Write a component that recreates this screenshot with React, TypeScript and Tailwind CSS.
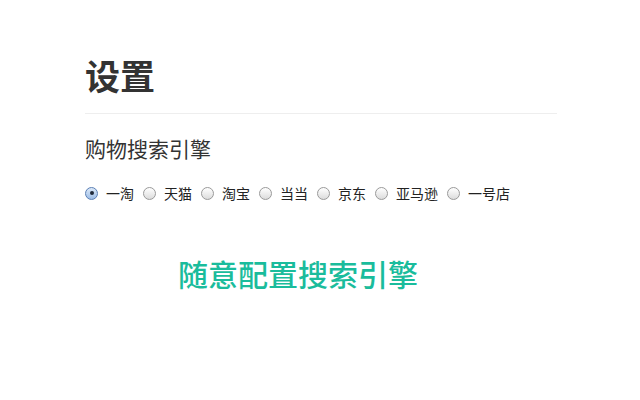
import { useState } from 'react';

const engines = ['一淘', '天猫', '淘宝', '当当', '京东', '亚马逊', '一号店'];

const font = 'font-["Noto_Sans_CJK_SC","Liberation_Sans",sans-serif]';

const Radio = ({ checked }: { checked: boolean }) => (
  <span
    className={
      checked
        ? 'flex h-[13px] w-[13px] items-center justify-center rounded-full border border-[#5a7fb5] bg-gradient-to-b from-[#dce9f8] to-[#9dbde6]'
        : 'flex h-[13px] w-[13px] items-center justify-center rounded-full border border-[#9a9a9a] bg-gradient-to-b from-white to-[#dcdcdc]'
    }
  >
    {checked && <span className="h-[4px] w-[4px] rounded-full bg-[#1f2a3a]" />}
  </span>
);

export default function App() {
  const [selected, setSelected] = useState(0);

  return (
    <div className={`h-[400px] w-[640px] bg-white text-[#333] ${font}`}>
      <div className="flex w-[557px] flex-col pl-[85px] pt-[50px]">
        <h1 className="text-[35px] leading-[50px] font-bold">设置</h1>
        <div className="mt-[13px] h-px bg-[#eeeeee]" />
        <h2 className="mt-[19px] text-[21px] leading-[30px]">购物搜索引擎</h2>
        <div className="mt-[21px] flex items-center">
          {engines.map((name, i) => (
            <label
              key={name}
              onClick={() => setSelected(i)}
              className="mr-[9px] flex cursor-pointer items-center"
            >
              <Radio checked={selected === i} />
              <span className="ml-[8px] text-[14px] leading-[18px] text-[#222]">{name}</span>
            </label>
          ))}
        </div>
        <p className="mt-[51px] pl-[93px] text-[30px] leading-[40px] font-medium text-[#1abc9c]">
          随意配置搜索引擎
        </p>
      </div>
    </div>
  );
}
